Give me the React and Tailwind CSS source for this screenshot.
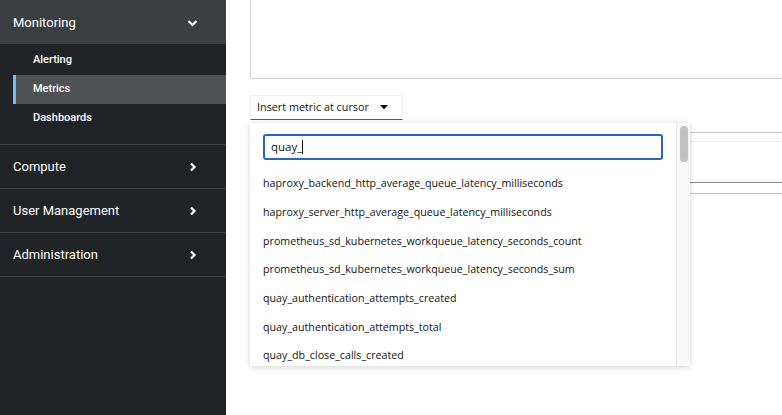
import React from 'react';

const metrics = [
    'haproxy_backend_http_average_queue_latency_milliseconds',
    'haproxy_server_http_average_queue_latency_milliseconds',
    'prometheus_sd_kubernetes_workqueue_latency_seconds_count',
    'prometheus_sd_kubernetes_workqueue_latency_seconds_sum',
    'quay_authentication_attempts_created',
    'quay_authentication_attempts_total',
    'quay_db_close_calls_created',
];

const ChevronRight = () => (
    <svg width="8" height="10" viewBox="0 0 8 10" className="text-white">
        <path d="M2 1.5 L5.5 5 L2 8.5" fill="none" stroke="currentColor" strokeWidth="2.2" />
    </svg>
);

const ChevronDown = () => (
    <svg width="11" height="8" viewBox="0 0 11 8" className="text-white">
        <path d="M1.5 2 L5.5 6 L9.5 2" fill="none" stroke="currentColor" strokeWidth="2.2" />
    </svg>
);

const NavSection = ({ label }) => (
    <div className="h-[44px] flex items-center justify-between pl-[13px] pr-[29px] border-b border-[#404346] text-white text-[13px]">
        <span>{label}</span>
        <ChevronRight />
    </div>
);

const App = () => {
    return (
        <div className="flex w-[782px] h-[415px] overflow-hidden font-['Roboto',sans-serif]">
            <nav className="w-[226px] shrink-0 bg-[#212427]">
                <div className="h-[44px] pt-[1px] bg-[#3c3f42] flex items-center justify-between pl-[13px] pr-[28px] text-white text-[13px]">
                    <span>Monitoring</span>
                    <ChevronDown />
                </div>
                <div className="pt-[2px] pb-[11px] border-b border-[#404346] text-white text-[11px] font-medium">
                    <div className="h-[29px] flex items-center pl-[33px]">Alerting</div>
                    <div className="h-[29px] flex items-center pl-[17px] ml-[13px] bg-[#4f5255] border-l-[3px] border-[#73bcf7]">
                        Metrics
                    </div>
                    <div className="h-[29px] flex items-center pl-[33px]">Dashboards</div>
                </div>
                <NavSection label="Compute" />
                <NavSection label="User Management" />
                <NavSection label="Administration" />
            </nav>

            <main className="flex-1 relative bg-white font-['Open_Sans',sans-serif]">
                <div className="ml-[24px] h-[79px] border-l border-b border-[#d2d2d2]" />

                <div className="ml-[24px] mt-[16px] w-[153px] h-[25px] flex items-center justify-between pl-[6px] pr-[14px] border border-[#f0f0f0] border-b-[#2b63c4] text-[10.8px] text-[#151515] whitespace-nowrap">
                    <span>Insert metric at cursor</span>
                    <svg width="8" height="5" viewBox="0 0 8 5"><path d="M0 0 H8 L4 4.5 Z" fill="#151515" /></svg>
                </div>

                <div className="ml-[24px] mt-[12px] h-[10px] border-t border-[#c7c7c7] border-b border-b-[#ededed]" />
                <div className="ml-[24px] mt-[40px] h-[12px] border-t border-[#8a8d90] border-b border-b-[#c7c7c7]" />

                <div className="absolute left-[24px] top-[123px] w-[440px] h-[243px] bg-white flex shadow-[0_1px_6px_rgba(0,0,0,0.18)]">
                    <div className="flex-1 pl-[13px] pr-[13px] pt-[11px] overflow-hidden">
                        <div className="h-[26px] border-2 border-[#2b63c4] rounded-[3px] flex items-center pl-[6px] text-[11.5px] text-[#151515]">
                            <span>quay_</span>
                            <span className="w-px h-[14px] bg-[#151515]" />
                        </div>
                        <ul className="mt-[9px] text-[10.7px] text-[#151515]">
                            {metrics.map(m => (
                                <li key={m} className="h-[28.7px] flex items-center whitespace-nowrap">{m}</li>
                            ))}
                        </ul>
                    </div>
                    <div className="w-[14px] bg-[#f8f8f8] border-l border-[#e8e8e8] pt-[3px] flex justify-center">
                        <div className="w-[8px] h-[36px] rounded-full bg-[#c1c1c1]" />
                    </div>
                </div>
            </main>
        </div>
    );
};

export default App;
